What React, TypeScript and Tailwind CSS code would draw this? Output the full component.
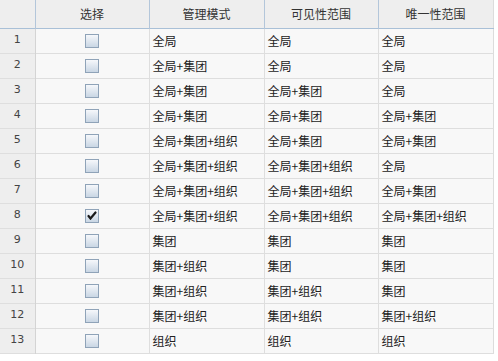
const rows: [string, string, string][] = [
  ['全局', '全局', '全局'],
  ['全局+集团', '全局', '全局'],
  ['全局+集团', '全局+集团', '全局'],
  ['全局+集团', '全局+集团', '全局+集团'],
  ['全局+集团+组织', '全局+集团', '全局+集团'],
  ['全局+集团+组织', '全局+集团+组织', '全局'],
  ['全局+集团+组织', '全局+集团+组织', '全局+集团'],
  ['全局+集团+组织', '全局+集团+组织', '全局+集团+组织'],
  ['集团', '集团', '集团'],
  ['集团+组织', '集团', '集团'],
  ['集团+组织', '集团+组织', '集团'],
  ['集团+组织', '集团+组织', '集团+组织'],
  ['组织', '组织', '组织'],
];

function Checkbox({ checked }: { checked?: boolean }) {
  return (
    <div className="mx-auto flex h-[14px] w-[14px] items-center justify-center border border-[#8fa3b8] bg-gradient-to-b from-[#f6f8fb] to-[#c9d6e4]">
      {checked && (
        <svg width="10" height="9" viewBox="0 0 10 9">
          <path d="M1.5 5 L3.5 7.5 L8.5 1.5" fill="none" stroke="#1a1a1a" strokeWidth="2.2" strokeLinecap="round" />
        </svg>
      )}
    </div>
  );
}

export default function App() {
  const headers = ['选择', '管理模式', '可见性范围', '唯一性范围'];
  return (
    <div className="h-[361px] w-[498px] bg-white text-[12px] text-[#222]" style={{ fontFamily: '"Noto Sans CJK SC", sans-serif' }}>
      <table className="w-[493px] table-fixed border-collapse border-r border-b border-[#dcdcdc]">
        <colgroup>
          <col className="w-[35px]" />
          <col className="w-[114px]" />
          <col className="w-[115px]" />
          <col className="w-[114px]" />
          <col className="w-[115px]" />
        </colgroup>
        <thead>
          <tr className="h-[28px] border-b border-[#a9c0d7] bg-[#eeeeee]">
            <th className="border-r border-[#b3c6da]" />
            {headers.map((h, i) => (
              <th
                key={h}
                className={
                  'text-center font-normal text-[#333] ' + (i < 3 ? 'border-r border-[#b3c6da]' : '')
                }
              >
                {h}
              </th>
            ))}
          </tr>
        </thead>
        <tbody>
          {rows.map((r, i) => (
            <tr key={i} className="h-[25px] border-b border-[#dedede] bg-[#f8f8f8]">
              <td
                className="border-r border-[#d4d4d4] bg-[#eeeeee] text-center text-[11px] text-[#444]"
                style={{ fontFamily: '"DejaVu Sans", sans-serif' }}
              >
                {i + 1}
              </td>
              <td className="border-r border-[#dedede]">
                <Checkbox checked={i === 7} />
              </td>
              {r.map((c, j) => (
                <td key={j} className={'whitespace-nowrap pl-[3px] ' + (j < 2 ? 'border-r border-[#dedede]' : '')}>
                  {c}
                </td>
              ))}
            </tr>
          ))}
        </tbody>
      </table>
    </div>
  );
}
